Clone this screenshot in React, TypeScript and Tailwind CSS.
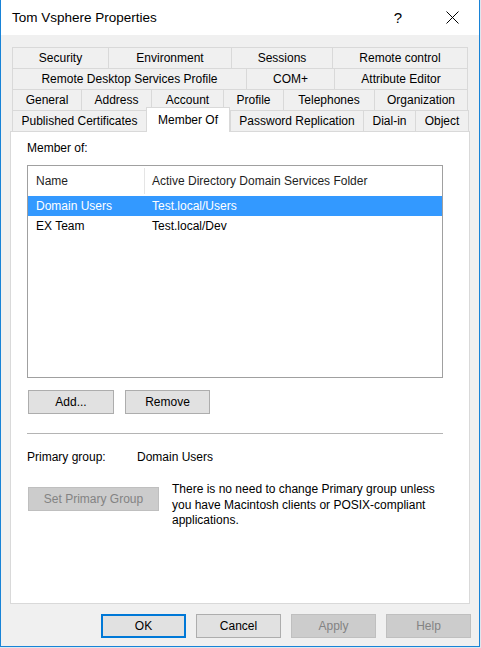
import React from "react";

type Tab = { label: string; w: number; selected?: boolean };

const tabRows: Tab[][] = [
  [
    { label: "Security", w: 96 },
    { label: "Environment", w: 123 },
    { label: "Sessions", w: 101 },
    { label: "Remote control", w: 136 },
  ],
  [
    { label: "Remote Desktop Services Profile", w: 234 },
    { label: "COM+", w: 88 },
    { label: "Attribute Editor", w: 134 },
  ],
  [
    { label: "General", w: 69 },
    { label: "Address", w: 70 },
    { label: "Account", w: 72 },
    { label: "Profile", w: 60 },
    { label: "Telephones", w: 91 },
    { label: "Organization", w: 94 },
  ],
  [
    { label: "Published Certificates", w: 134 },
    { label: "Member Of", w: 84, selected: true },
    { label: "Password Replication", w: 133 },
    { label: "Dial-in", w: 52 },
    { label: "Object", w: 54 },
  ],
];

const groups = [
  { name: "Domain Users", folder: "Test.local/Users", selected: true },
  { name: "EX Team", folder: "Test.local/Dev" },
];

function Button({
  children,
  width,
  disabled,
  isDefault,
}: {
  children: React.ReactNode;
  width: string;
  disabled?: boolean;
  isDefault?: boolean;
}) {
  const base = "h-[24px] flex items-center justify-center shrink-0 " + width;
  if (disabled) {
    return <div className={base + " bg-[#cccccc] border border-[#bfbfbf] text-[#838383]"}>{children}</div>;
  }
  if (isDefault) {
    return <div className={base + " bg-[#e1e1e1] border-2 border-[#0078d7]"}>{children}</div>;
  }
  return <div className={base + " bg-[#e1e1e1] border border-[#adadad]"}>{children}</div>;
}

export default function App() {
  return (
    <div className="w-[481px] h-[648px] bg-[#dfe6ee] font-['Liberation_Sans',Arial,sans-serif] text-[12px] leading-[14px] text-black">
      <div className="w-[480px] h-[647px] border-x border-b border-[#1883d7] bg-[#f0f0f0] flex flex-col">
        {/* title bar */}
        <div className="h-[35px] bg-white flex items-center pl-[11px] shrink-0">
          <span className="text-[13.5px]">Tom Vsphere Properties</span>
          <span className="ml-auto text-[15px] mr-[44px]">?</span>
          <svg width="13" height="13" viewBox="0 0 13 13" className="mr-[20px]">
            <path d="M0.5 0.5L12.5 12.5M12.5 0.5L0.5 12.5" stroke="#000" strokeWidth="1" />
          </svg>
        </div>

        {/* tabs */}
        <div className="pt-[12px] pl-[11px] flex flex-col">
          {tabRows.map((row, ri) => (
            <div key={ri} className="flex h-[21px] items-end">
              {row.map((t, ti) => {
                const last = ti === row.length - 1;
                if (t.selected) {
                  return (
                    <div
                      key={t.label}
                      style={{ width: t.w }}
                      className="relative z-10 h-[25px] -mb-px bg-white border-l border-t border-r border-[#d9d9d9] flex items-center justify-center pb-[1px]"
                    >
                      {t.label}
                    </div>
                  );
                }
                return (
                  <div
                    key={t.label}
                    style={{ width: t.w }}
                    className={
                      "h-[21px] border-l border-t border-[#d9d9d9] flex items-center justify-center" +
                      (last ? " border-r" : "")
                    }
                  >
                    {t.label}
                  </div>
                );
              })}
            </div>
          ))}
        </div>

        {/* page */}
        <div className="ml-[9px] w-[460px] h-[473px] bg-white border border-[#d9d9d9] pl-[16px] pt-[9px] flex flex-col shrink-0">
          <div>Member of:</div>

          <div className="mt-[10px] w-[416px] h-[213px] border border-[#a0a0a0] flex flex-col">
            <div className="h-[30px] flex items-center text-[#1e1e1e] shrink-0">
              <div className="w-[117px] h-[26px] pl-[8px] flex items-center border-r border-[#e5e5e5]">Name</div>
              <div className="pl-[7px]">Active Directory Domain Services Folder</div>
            </div>
            {groups.map((g) => (
              <div
                key={g.name}
                className={"h-[20px] flex items-center" + (g.selected ? " bg-[#3399ff] text-white" : "")}
              >
                <div className="w-[117px] pl-[8px]">{g.name}</div>
                <div className="pl-[7px]">{g.folder}</div>
              </div>
            ))}
          </div>

          <div className="mt-[12px] ml-px flex gap-[11px]">
            <Button width="w-[86px]">Add...</Button>
            <Button width="w-[85px]">Remove</Button>
          </div>

          <div className="mt-[19px] w-[416px] h-px bg-[#b4b4b4]" />

          <div className="mt-[16px] flex">
            <div className="w-[110px]">Primary group:</div>
            <div>Domain Users</div>
          </div>

          <div className="mt-[18px] ml-px flex items-start">
            <div className="mt-[5px]">
              <Button width="w-[131px]" disabled>
                Set Primary Group
              </Button>
            </div>
            <p className="ml-[13px] w-[280px] leading-[15.5px]">
              There is no need to change Primary group unless you have Macintosh clients or POSIX-compliant
              applications.
            </p>
          </div>
        </div>

        {/* dialog buttons */}
        <div className="mt-[10px] pr-[8px] flex justify-end gap-[10px]">
          <Button width="w-[85px]" isDefault>
            OK
          </Button>
          <Button width="w-[85px]">Cancel</Button>
          <Button width="w-[85px]" disabled>
            Apply
          </Button>
          <Button width="w-[85px]" disabled>
            Help
          </Button>
        </div>
      </div>
    </div>
  );
}
